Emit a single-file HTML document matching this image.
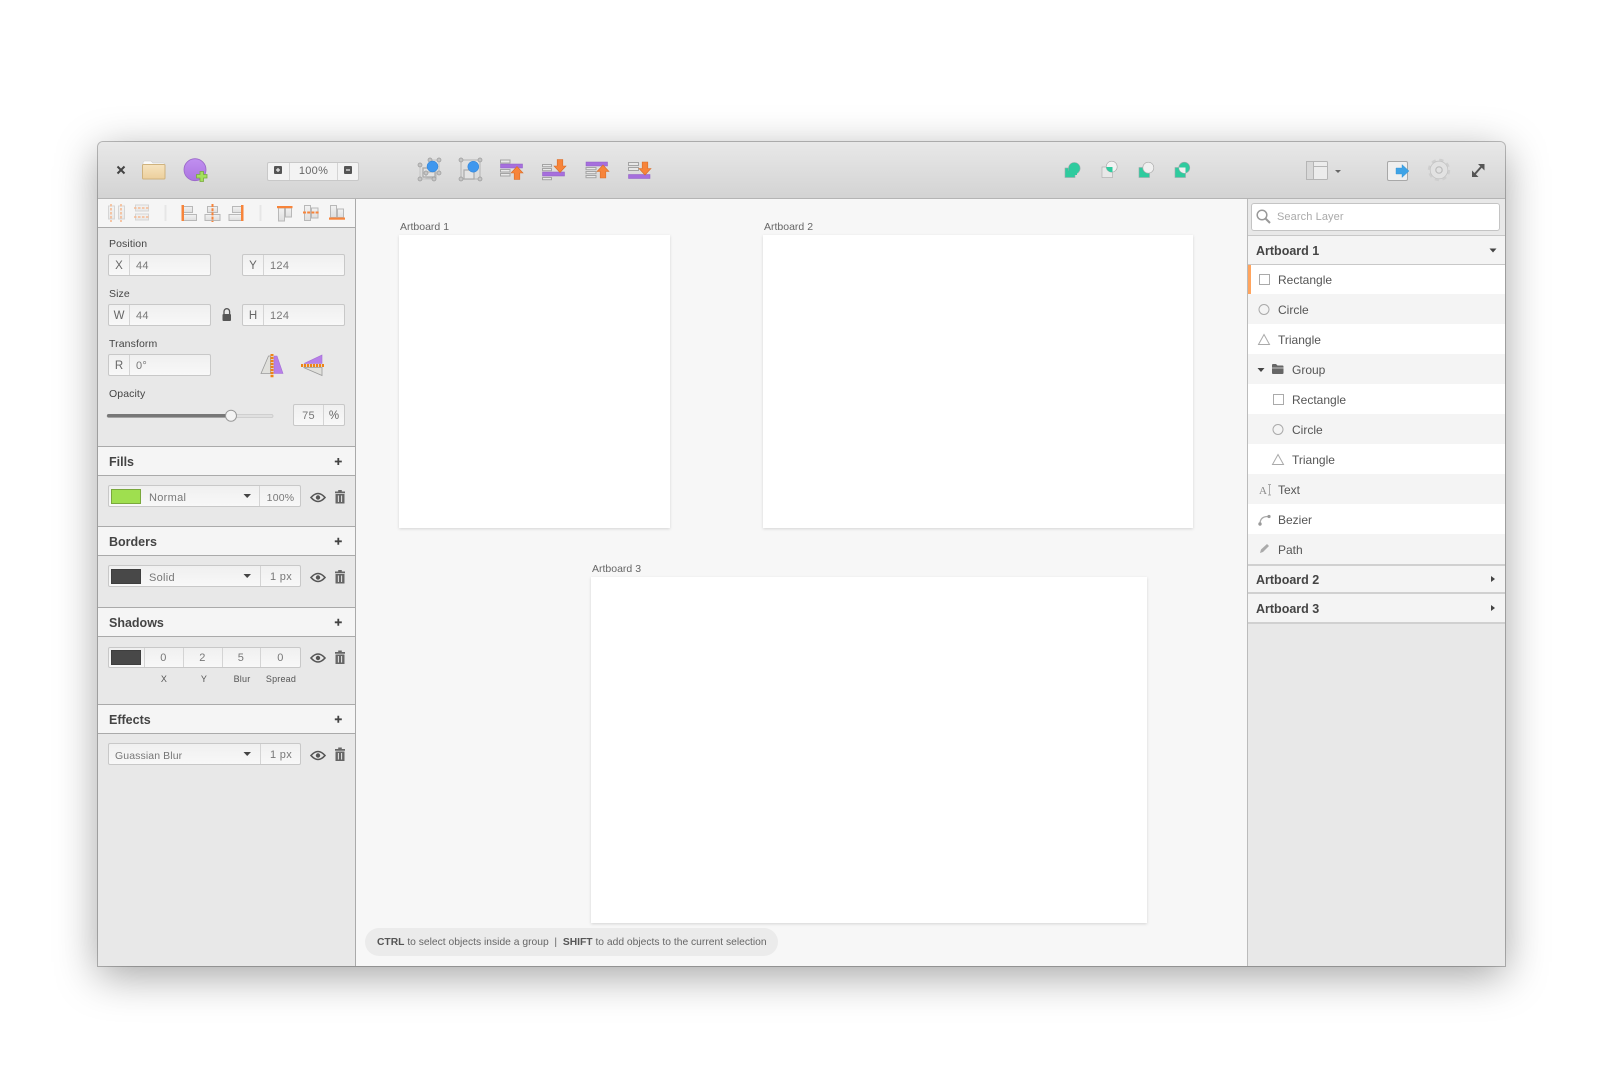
<!DOCTYPE html>
<html><head><meta charset="utf-8"><title>Editor</title>
<style>
html,body{margin:0;padding:0;background:#fff;width:1600px;height:1080px;overflow:hidden}
body{position:relative;font-family:"Liberation Sans",sans-serif;font-size:11px;color:#555;filter:blur(.3px)}
div{position:absolute;box-sizing:border-box}
.t{position:absolute;white-space:nowrap;line-height:14px;height:14px;margin-top:1px}
.lb{color:#444;font-size:10.5px;letter-spacing:.1px}
.v{color:#777;font-size:11px;letter-spacing:.3px}
.k{color:#666;font-size:11.5px}
.h{color:#444;font-weight:bold;font-size:12.5px}
.r{color:#555;font-size:12px}
.c{text-align:center}
.in{background:linear-gradient(#f0f0f0,#f8f8f8);border:1px solid #c8c8c8;border-radius:2px}
.sec{left:98px;width:257px;height:30px;background:#f5f5f5;border-top:1px solid #aaa;border-bottom:1px solid #aaa}
.d{width:1px;background:#d4d4d4}
.row{left:1248px;width:257px;height:30px}
.w{background:#fff}.g{background:#f4f4f4}
.art{background:#fff;box-shadow:0 1px 3px rgba(0,0,0,.14)}
svg{position:absolute;left:0;top:0}
</style></head><body>
<div id="win" style="left:98px;top:142px;width:1407px;height:824px;background:#e8e8e8;border-radius:5px 5px 0 0;box-shadow:0 10px 42px rgba(0,0,0,.36),0 0 0 1px #c0c0c0"></div>
<div style="left:98px;top:142px;width:1407px;height:57px;background:linear-gradient(#e8e8e8,#d3d3d3);border-bottom:1px solid #b4b4b4;border-radius:5px 5px 0 0"></div>
<div style="left:98px;top:199px;width:257px;height:29px;background:#f5f5f5;border-bottom:1px solid #aaa"></div>
<div style="left:355px;top:199px;width:1px;height:767px;background:#aaa"></div>
<div style="left:356px;top:199px;width:891px;height:767px;background:#f7f7f7"></div>
<div style="left:1247px;top:199px;width:1px;height:767px;background:#bbb"></div>

<div class="t" style="left:400px;top:219px;color:#666;font-size:10.5px">Artboard 1</div>
<div class="t" style="left:764px;top:219px;color:#666;font-size:10.5px">Artboard 2</div>
<div class="t" style="left:592px;top:561px;color:#666;font-size:10.5px">Artboard 3</div>
<div class="art" style="left:399px;top:235px;width:271px;height:293px"></div>
<div class="art" style="left:763px;top:235px;width:430px;height:293px"></div>
<div class="art" style="left:591px;top:577px;width:556px;height:346px"></div>

<div style="left:365px;top:928px;width:413px;height:28px;border-radius:14px;background:#ebebeb"></div>
<div class="t" style="left:377px;top:935px;font-size:10.3px;color:#666"><b style="color:#555">CTRL</b> to select objects inside a group&nbsp; | &nbsp;<b style="color:#555">SHIFT</b> to add objects to the current selection</div>

<!-- zoom control -->
<div class="in" style="left:267px;top:162px;width:92px;height:19px;background:#f3f3f3"></div>
<div class="d" style="left:289px;top:163px;height:17px"></div><div class="d" style="left:337px;top:163px;height:17px"></div>
<div class="t c" style="left:290px;top:164px;margin-top:0;width:47px;color:#666;font-size:11px;letter-spacing:.3px">100%</div>

<!-- left panel -->
<div class="t lb" style="left:109px;top:236px">Position</div>
<div class="in" style="left:108px;top:254px;width:103px;height:22px"></div><div class="d" style="left:129px;top:255px;height:20px"></div>
<div class="t k c" style="left:109px;top:258px;width:20px">X</div><div class="t v" style="left:136px;top:258px">44</div>
<div class="in" style="left:242px;top:254px;width:103px;height:22px"></div><div class="d" style="left:263px;top:255px;height:20px"></div>
<div class="t k c" style="left:243px;top:258px;width:20px">Y</div><div class="t v" style="left:270px;top:258px">124</div>

<div class="t lb" style="left:109px;top:286px">Size</div>
<div class="in" style="left:108px;top:304px;width:103px;height:22px"></div><div class="d" style="left:129px;top:305px;height:20px"></div>
<div class="t k c" style="left:109px;top:308px;width:20px">W</div><div class="t v" style="left:136px;top:308px">44</div>
<div class="in" style="left:242px;top:304px;width:103px;height:22px"></div><div class="d" style="left:263px;top:305px;height:20px"></div>
<div class="t k c" style="left:243px;top:308px;width:20px">H</div><div class="t v" style="left:270px;top:308px">124</div>

<div class="t lb" style="left:109px;top:336px">Transform</div>
<div class="in" style="left:108px;top:354px;width:103px;height:22px"></div><div class="d" style="left:129px;top:355px;height:20px"></div>
<div class="t k c" style="left:109px;top:358px;width:20px">R</div><div class="t v" style="left:136px;top:358px">0°</div>

<div class="t lb" style="left:109px;top:386px">Opacity</div>
<div class="in" style="left:293px;top:404px;width:52px;height:22px"></div><div class="d" style="left:323px;top:405px;height:20px"></div>
<div class="t v c" style="left:294px;top:408px;width:29px">75</div><div class="t k c" style="left:324px;top:408px;width:20px">%</div>

<div class="sec" style="top:446px"></div><div class="t h" style="left:109px;top:454px">Fills</div>
<div class="in" style="left:108px;top:485px;width:193px;height:22px"></div><div class="d" style="left:259px;top:486px;height:20px"></div>
<div style="left:111px;top:489px;width:30px;height:15px;background:#9fdf4f;border:1px solid #7aa83c"></div>
<div class="t v" style="left:149px;top:490px">Normal</div><div class="t v c" style="left:260px;top:490px;width:41px;font-size:10.5px;letter-spacing:.2px">100%</div>

<div class="sec" style="top:526px"></div><div class="t h" style="left:109px;top:534px">Borders</div>
<div class="in" style="left:108px;top:565px;width:193px;height:22px"></div><div class="d" style="left:260px;top:566px;height:20px"></div>
<div style="left:111px;top:569px;width:30px;height:15px;background:#484848;border:1px solid #3e3e3e"></div>
<div class="t v" style="left:149px;top:570px">Solid</div><div class="t v c" style="left:261px;top:569px;width:40px">1 px</div>

<div class="sec" style="top:607px"></div><div class="t h" style="left:109px;top:615px">Shadows</div>
<div class="in" style="left:108px;top:647px;width:193px;height:21px"></div>
<div class="d" style="left:144px;top:648px;height:19px"></div><div class="d" style="left:183px;top:648px;height:19px"></div><div class="d" style="left:222px;top:648px;height:19px"></div><div class="d" style="left:260px;top:648px;height:19px"></div>
<div style="left:111px;top:650px;width:30px;height:15px;background:#484848;border:1px solid #3e3e3e"></div>
<div class="t v c" style="left:144px;top:650px;width:39px">0</div><div class="t v c" style="left:183px;top:650px;width:39px">2</div><div class="t v c" style="left:222px;top:650px;width:38px">5</div><div class="t v c" style="left:260px;top:650px;width:41px">0</div>
<div class="t c" style="left:144px;top:672px;margin-top:0;width:40px;font-size:9px;color:#555;letter-spacing:.2px">X</div>
<div class="t c" style="left:184px;top:672px;margin-top:0;width:40px;font-size:9px;color:#555;letter-spacing:.2px">Y</div>
<div class="t c" style="left:222px;top:672px;margin-top:0;width:40px;font-size:9px;color:#555;letter-spacing:.2px">Blur</div>
<div class="t c" style="left:261px;top:672px;margin-top:0;width:40px;font-size:9px;color:#555;letter-spacing:.2px">Spread</div>

<div class="sec" style="top:704px"></div><div class="t h" style="left:109px;top:712px">Effects</div>
<div class="in" style="left:108px;top:743px;width:193px;height:22px"></div><div class="d" style="left:260px;top:744px;height:20px"></div>
<div class="t v" style="left:115px;top:748px;font-size:10.5px;letter-spacing:.1px">Guassian Blur</div><div class="t v c" style="left:261px;top:747px;width:40px">1 px</div>

<!-- right panel -->
<div style="left:1251px;top:203px;width:249px;height:28px;background:#fff;border:1px solid #c4c4c4;border-radius:3px"></div>
<div class="t" style="left:1277px;top:210px;margin-top:0;color:#aaa;font-size:11px;letter-spacing:.1px">Search Layer</div>
<div style="left:1248px;top:235px;width:257px;height:30px;background:#f4f4f4;border-top:1px solid #c8c8c8;border-bottom:1px solid #c8c8c8"></div>
<div class="t h" style="left:1256px;top:243px">Artboard 1</div>
<div class="row w" style="top:265px"></div><div style="left:1248px;top:265px;width:3px;height:29px;background:#ffa55f"></div>
<div class="row g" style="top:294px"></div><div class="row w" style="top:324px"></div><div class="row g" style="top:354px"></div>
<div class="row w" style="top:384px"></div><div class="row g" style="top:414px"></div><div class="row w" style="top:444px"></div>
<div class="row g" style="top:474px"></div><div class="row w" style="top:504px"></div><div class="row g" style="top:534px"></div>
<div class="t r" style="left:1278px;top:271.500px">Rectangle</div>
<div class="t r" style="left:1278px;top:301.500px">Circle</div>
<div class="t r" style="left:1278px;top:331.500px">Triangle</div>
<div class="t r" style="left:1292px;top:361.500px">Group</div>
<div class="t r" style="left:1292px;top:391.500px">Rectangle</div>
<div class="t r" style="left:1292px;top:421.500px">Circle</div>
<div class="t r" style="left:1292px;top:451.500px">Triangle</div>
<div class="t r" style="left:1278px;top:481.500px">Text</div>
<div class="t r" style="left:1278px;top:511.500px">Bezier</div>
<div class="t r" style="left:1278px;top:541.500px">Path</div>
<div style="left:1248px;top:564px;width:257px;height:30px;background:#f4f4f4;border-top:2px solid #d0d0d0;border-bottom:2px solid #d0d0d0"></div>
<div style="left:1248px;top:594px;width:257px;height:30px;background:#f4f4f4;border-bottom:2px solid #d0d0d0"></div>
<div class="t h" style="left:1256px;top:572px">Artboard 2</div>
<div class="t h" style="left:1256px;top:601px">Artboard 3</div>

<svg width="1600" height="1080" viewBox="0 0 1600 1080">
<defs>
<linearGradient id="gr" x1="0" y1="0" x2="0" y2="1"><stop offset="0" stop-color="#f2f2f2"/><stop offset="1" stop-color="#dedede"/></linearGradient>
<linearGradient id="fold" x1="0" y1="0" x2="0" y2="1"><stop offset="0" stop-color="#f6e3bf"/><stop offset="1" stop-color="#eccf9c"/></linearGradient>
<linearGradient id="pur" x1="0" y1="0" x2="0" y2="1"><stop offset="0" stop-color="#c08ff0"/><stop offset="1" stop-color="#ab74e0"/></linearGradient>
<g id="eye"><path d="M-7 0Q0-8 7 0Q0 8-7 0Z" fill="none" stroke="#555" stroke-width="1.6"/><circle r="2.2" fill="#555"/></g>
<g id="trash"><path d="M-5-6.500H5V-4.800H-5ZM-1.800-8H1.800V-6.500H-1.800Z" fill="#666"/><path d="M-4.500-4H4.500V5.500H-4.500Z" fill="#666"/><path d="M-1.600-2.500V4M1.600-2.500V4" stroke="#e8e8e8" stroke-width="1"/></g>
<g id="plus"><path d="M-3.500 0H3.500M0-3.500V3.500" stroke="#444" stroke-width="1.800"/></g>
<g id="arrU"><path d="M0-6.500L6 0H2.800V6.500H-2.800V0H-6Z" fill="#f7843a" stroke="#d86d28" stroke-width=".6"/></g>
<g id="arrD"><path d="M0 6.500L6 0H2.800V-6.500H-2.800V0H-6Z" fill="#f7843a" stroke="#d86d28" stroke-width=".6"/></g>
<g id="dot"><circle r="2" fill="#c4c4c4" stroke="#999" stroke-width=".7"/></g>
</defs>

<!-- toolbar left -->
<path d="M117.500 166.500L124.500 173.500M124.500 166.500L117.500 173.500" stroke="#444" stroke-width="2"/>
<path d="M143 163q0-2 2-2h6l2 2h10q2 0 2 2v2h-22Z" fill="#fafafa" stroke="#ccc" stroke-width=".6"/>
<rect x="142.500" y="164.500" width="22.500" height="14.500" rx="1" fill="url(#fold)" stroke="#cfb27d" stroke-width="1"/>
<circle cx="195" cy="169.700" r="11" fill="url(#pur)" stroke="#9a68c9" stroke-width=".8"/>
<path d="M200 172h3.500v-3h3.500v3h3.500v3.500h-3.500v3.500h-3.500v-3.500h-3.500Z" transform="translate(-3.500 2.500)" fill="#a4e05c" stroke="#78ab3c" stroke-width=".8"/>
<rect x="274" y="166" width="8" height="8" rx="1" fill="#555"/><path d="M276 170H280M278 168V172" stroke="#eee" stroke-width="1.200"/>
<rect x="344" y="166" width="8" height="8" rx="1" fill="#555"/><path d="M346 170H350" stroke="#eee" stroke-width="1.200"/>

<!-- toolbar middle: arrange -->
<rect x="423" y="168" width="12" height="9" fill="#e2e2e2" stroke="#aaa" stroke-width="1.300"/>
<rect x="426" y="172" width="10" height="6" fill="none" stroke="#bbb" stroke-width="1.200"/>
<path d="M430 160H439V173M420 165V179H434" fill="none" stroke="#c4c4c4"/>
<use href="#dot" x="430" y="160"/><use href="#dot" x="439" y="160"/><use href="#dot" x="420" y="165"/><use href="#dot" x="439" y="173"/><use href="#dot" x="420" y="179"/><use href="#dot" x="434" y="179"/><use href="#dot" x="426" y="173"/>
<circle cx="432.500" cy="166.500" r="5.500" fill="#3f97ee" stroke="#2f7fcf" stroke-width=".5"/>

<rect x="461" y="160" width="19" height="19" fill="none" stroke="#bbb" stroke-width="1.200"/>
<rect x="464" y="170" width="10" height="9" fill="#e4e4e4" stroke="#aaa" stroke-width="1.200"/>
<use href="#dot" x="461" y="160"/><use href="#dot" x="480" y="160"/><use href="#dot" x="461" y="179"/><use href="#dot" x="480" y="179"/>
<circle cx="473.300" cy="166.700" r="5.500" fill="#3f97ee" stroke="#2f7fcf" stroke-width=".5"/>

<g stroke="#a4a4a4" stroke-width="1" fill="#e8e8e8">
<rect x="500.500" y="160" width="9.500" height="3"/>
<rect x="500.500" y="169.500" width="9.500" height="2.500"/>
<rect x="500.500" y="173.500" width="9.500" height="2.500"/>
<rect x="542.500" y="164.500" width="9" height="2.200"/>
<rect x="542.500" y="168.500" width="9" height="2.200"/>
<rect x="542.500" y="177.500" width="9" height="2.200"/>
<rect x="586" y="167.500" width="10" height="2.200"/>
<rect x="586" y="171.500" width="10" height="2.200"/>
<rect x="586" y="175.500" width="10" height="2.200"/>
<rect x="628.500" y="162.500" width="10" height="3"/>
<rect x="628.500" y="167.500" width="10" height="3"/>
</g>
<rect x="500.500" y="164" width="22" height="4" fill="#a66fdd" stroke="#8d5cc4" stroke-width=".5"/>
<rect x="542.500" y="172" width="22" height="4" fill="#a66fdd" stroke="#8d5cc4" stroke-width=".5"/>
<rect x="586" y="162" width="21.500" height="4" fill="#a66fdd" stroke="#8d5cc4" stroke-width=".5"/>
<rect x="628.500" y="174.500" width="21.500" height="4" fill="#a66fdd" stroke="#8d5cc4" stroke-width=".5"/>
<use href="#arrU" x="517" y="173"/>
<use href="#arrD" x="560" y="166"/>
<use href="#arrU" x="603" y="171.500"/>
<use href="#arrD" x="645" y="168.500"/>

<!-- toolbar boolean -->
<g stroke="#9aa" stroke-width=".6">
<rect x="1065" y="168" width="10" height="9.500" fill="#2ecb9e"/><circle cx="1074.300" cy="168.300" r="5.800" fill="#2ecb9e"/><path d="M1069 167h8v8h-8Z" fill="#2ecb9e" stroke="none"/>
<rect x="1102" y="167" width="10.500" height="10.500" fill="#e8e8e8" stroke="#aaa"/><circle cx="1111.700" cy="166.700" r="5.500" fill="#f2f2f2" stroke="#aaa"/>
<path d="M1106.300 167H1112.500V172.100A5.500 5.500 0 0 1 1106.300 167Z" fill="#2ecb9e" stroke="none"/>
<rect x="1139" y="167.500" width="10.500" height="10" fill="#2ecb9e"/><circle cx="1148.300" cy="167.700" r="5.500" fill="#f0f0f0" stroke="#aaa"/>
<rect x="1175" y="167.500" width="10.500" height="10" fill="#2ecb9e"/><circle cx="1184.300" cy="167.700" r="5.500" fill="#2ecb9e"/>
<path d="M1179 167.500H1185.500V173A5.500 5.500 0 0 1 1179 167.500Z" fill="#f0f0f0" stroke="none"/>
</g>

<!-- toolbar right -->
<rect x="1306.500" y="161.500" width="21" height="18" rx="1" fill="#ececec" stroke="#b5b5b5"/>
<rect x="1306.500" y="161.500" width="7" height="18" fill="#d8d8d8" stroke="#b5b5b5"/>
<path d="M1313.500 166.500H1327.500" stroke="#b5b5b5"/>
<path d="M1335 170H1341L1338 173Z" fill="#666"/>
<rect x="1387.500" y="161.500" width="20" height="19" rx="1.500" fill="#efefef" stroke="#a8a8a8"/>
<path d="M1396 168H1402V164.500L1409 171L1402 177.500V174H1396Z" fill="#3fa3e6" stroke="#3592d0" stroke-width=".4"/>
<circle cx="1439" cy="170" r="10" fill="none" stroke="#cfcfcf" stroke-width="2.400" stroke-dasharray="4.200 3.650"/>
<circle cx="1439" cy="170" r="8.800" fill="#e2e2e2" stroke="#c4c4c4" stroke-width=".8"/>
<circle cx="1439" cy="170" r="3.200" fill="none" stroke="#bbb" stroke-width="1.200"/>
<path d="M1474 175L1482 166" stroke="#555" stroke-width="2"/>
<path d="M1478 164L1484.500 164L1484.500 170.500Z" fill="#555"/><path d="M1472 170.500L1472 177L1478.500 177Z" fill="#555"/>

<!-- align bar -->
<g opacity=".55">
<rect x="108.500" y="206" width="6" height="13" fill="url(#gr)" stroke="#bbb"/><rect x="118.500" y="206" width="6" height="13" fill="url(#gr)" stroke="#bbb"/>
<path d="M111 204V222M121 204V222" stroke="#f78a42" stroke-width="1.600" stroke-dasharray="2.500 1.500"/>
<rect x="135.500" y="205" width="13" height="6" fill="url(#gr)" stroke="#bbb"/><rect x="135.500" y="214" width="13" height="6" fill="url(#gr)" stroke="#bbb"/>
<path d="M134 208H150M134 217H150" stroke="#f78a42" stroke-width="1.600" stroke-dasharray="2.500 1.500"/>
</g>
<rect x="164.500" y="205" width="2" height="16" fill="#e6e6e6"/>
<rect x="259.500" y="205" width="2" height="16" fill="#e6e6e6"/>

<g stroke="#b8b8b8" fill="url(#gr)">
<rect x="183.500" y="206.500" width="9" height="6"/><rect x="183.500" y="214.500" width="13" height="6"/>
<rect x="207.500" y="206.500" width="10" height="6"/><rect x="205" y="214.500" width="15" height="6"/>
<rect x="232.500" y="206.500" width="9" height="6"/><rect x="229" y="214.500" width="12.500" height="6"/>
<rect x="278.500" y="208" width="6" height="13"/><rect x="285.500" y="208" width="6" height="9"/>
<rect x="304.500" y="205.500" width="6" height="15"/><rect x="311.500" y="208" width="6.500" height="10"/>
<rect x="330.500" y="205.500" width="6" height="12"/><rect x="337.500" y="209" width="6" height="8.500"/>
</g>
<rect x="181.500" y="205" width="2.500" height="16" fill="#f7843a"/>
<path d="M212.500 204V222" stroke="#f7843a" stroke-width="2" stroke-dasharray="3 1.200"/>
<rect x="241" y="205" width="2.500" height="16" fill="#f7843a"/>
<rect x="277" y="206" width="15.500" height="2.200" fill="#f7843a"/>
<path d="M303 212.500H319" stroke="#f7843a" stroke-width="2" stroke-dasharray="3 1.200"/>
<rect x="329" y="217.500" width="16" height="2.200" fill="#f7843a"/>

<!-- lock -->
<path d="M224 314v-2.500a2.800 2.800 0 0 1 5.600 0V314" fill="none" stroke="#555" stroke-width="1.300"/>
<rect x="222.500" y="314" width="8.500" height="7" rx="1" fill="#555"/>

<!-- flips -->
<path d="M261 373.500L268.500 356H270.500V373.500Z" fill="#e0e0dc" stroke="#999" stroke-width=".8"/>
<path d="M274 356H277L283 373.500H274Z" fill="#b77fe8" stroke="#a56ed6" stroke-width=".6"/>
<path d="M272 354V378" stroke="#ee8416" stroke-width="3" stroke-dasharray="2.200 .8"/>
<path d="M304 363.500L322 355V363.500Z" fill="#b77fe8" stroke="#a56ed6" stroke-width=".6"/>
<path d="M303.500 367.500H322V375.500Z" fill="#e0e0dc" stroke="#999" stroke-width=".8"/>
<path d="M301 365.500H324" stroke="#ee8416" stroke-width="3" stroke-dasharray="2.200 .8"/>

<!-- slider -->
<rect x="107" y="414.500" width="166" height="3" rx="1.500" fill="#e0e0e0" stroke="#c8c8c8" stroke-width=".8"/>
<rect x="107" y="414" width="124" height="3.500" rx="1.700" fill="#777"/>
<circle cx="231" cy="415.700" r="5.500" fill="#f4f4f4" stroke="#999"/>

<!-- section plus -->
<use href="#plus" x="338.300" y="461.500"/><use href="#plus" x="338.300" y="541.300"/><use href="#plus" x="338.300" y="622.300"/><use href="#plus" x="338.300" y="719.300"/>
<!-- dropdown arrows -->
<path d="M243.500 494H251L247.200 498Z" fill="#444"/><path d="M243.500 574H251L247.200 578Z" fill="#444"/><path d="M243.500 752H251L247.200 756Z" fill="#444"/>
<!-- eye/trash -->
<use href="#eye" x="318" y="497.500"/><use href="#trash" x="340" y="498"/>
<use href="#eye" x="318" y="577.500"/><use href="#trash" x="340" y="578"/>
<use href="#eye" x="318" y="658"/><use href="#trash" x="340" y="658.500"/>
<use href="#eye" x="318" y="755.500"/><use href="#trash" x="340" y="755.500"/>

<!-- search icon -->
<circle cx="1262" cy="215" r="4.800" fill="none" stroke="#999" stroke-width="1.500"/>
<path d="M1265.500 218.500L1270 223" stroke="#999" stroke-width="2"/>

<!-- layers -->
<path d="M1489.500 248.500H1496.500L1493 252.500Z" fill="#444"/>
<path d="M1491 576V582L1495 579Z" fill="#444"/><path d="M1491 605V611L1495 608Z" fill="#444"/>
<g fill="none" stroke="#aaa" stroke-width="1">
<rect x="1259.500" y="274.500" width="10" height="10"/>
<circle cx="1264" cy="309.500" r="5"/>
<path d="M1264 334.500L1269.500 344.500H1258.500Z"/>
<rect x="1273.500" y="394.500" width="10" height="10"/>
<circle cx="1278" cy="429.500" r="5"/>
<path d="M1278 454.500L1283.500 464.500H1272.500Z"/>
<path d="M1260 524C1260 518 1264 516.500 1268 516.500" stroke-width="1.300"/>
<path d="M1268 484.500H1271M1269.500 484.500V495M1268 495H1271"/>
</g>
<circle cx="1260" cy="524" r="1.700" fill="#999"/><circle cx="1269" cy="516.500" r="1.600" fill="#999"/>
<path d="M1260 553L1261 549.500L1267 544L1269 546L1263 552Z" fill="#aaa"/>
<text x="1259" y="494" font-family="Liberation Serif, serif" font-size="11" fill="#888">A</text>
<path d="M1257.500 368H1264.500L1261 372Z" fill="#444"/>
<path d="M1272 365q0-1 1-1h3l1.500 1.500h5q1 0 1 1V373q0 1-1 1h-9.500q-1 0-1-1Z" fill="#666"/>
<path d="M1272 368H1284" stroke="#eee" stroke-width=".7"/>
</svg>
</body></html>
